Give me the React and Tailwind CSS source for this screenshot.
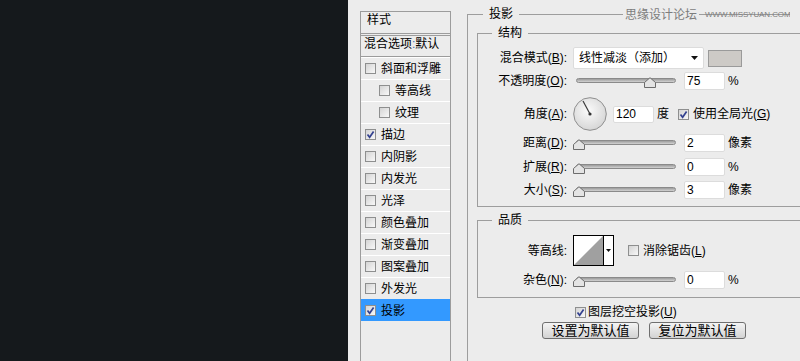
import React from "react";

const styleItems = [
  { name: "斜面和浮雕", sub: false, checked: false },
  { name: "等高线", sub: true, checked: false },
  { name: "纹理", sub: true, checked: false },
  { name: "描边", sub: false, checked: true },
  { name: "内阴影", sub: false, checked: false },
  { name: "内发光", sub: false, checked: false },
  { name: "光泽", sub: false, checked: false },
  { name: "颜色叠加", sub: false, checked: false },
  { name: "渐变叠加", sub: false, checked: false },
  { name: "图案叠加", sub: false, checked: false },
  { name: "外发光", sub: false, checked: false },
  { name: "投影", sub: false, checked: true, active: true },
];

function Check({ checked }) {
  return (
    <span className="flex h-[11px] w-[11px] shrink-0 items-center justify-center border border-[#8e8f8f] bg-gradient-to-br from-[#d4d4d4] to-[#f8f8f8]">
      {checked && (
        <svg viewBox="0 0 9 9" className="h-[9px] w-[9px]">
          <path d="M1.5 4.5 L3.6 7.2 L7.6 1.4" stroke="#33418f" strokeWidth="1.7" fill="none" />
        </svg>
      )}
    </span>
  );
}

function Label({ children }) {
  return <div className="w-[89px] shrink-0 text-right leading-[16px]">{children}</div>;
}

function Field({ value, w = "w-[41px]", h = "h-[18px]" }) {
  return (
    <div className={`${w} ${h} flex shrink-0 items-center rounded-[2px] border border-[#dcdcdc] bg-white pl-[2px] leading-[14px]`}>
      {value}
    </div>
  );
}

function Slider({ pos }) {
  return (
    <div className="relative ml-[6px] h-[18px] w-[103px] shrink-0">
      <div className="absolute left-[3px] right-0 top-[6px] h-[5px] rounded-full border border-[#8a8a8a] bg-gradient-to-b from-[#9c9c9c] to-[#d2d2d2]" />
      <svg className="absolute top-[5px]" style={{ left: pos }} width="12" height="11" viewBox="0 0 12 11">
        <path d="M0.5 10.5 V5.5 L6 0.7 L11.5 5.5 V10.5 Z" fill="#e4e4e4" stroke="#6c6c6c" />
      </svg>
    </div>
  );
}

function SliderRow({ label, pos, value, unit, className }) {
  return (
    <div className={`flex h-[18px] items-center ${className}`}>
      <Label>{label}</Label>
      <Slider pos={pos} />
      <div className="ml-[8px]">
        <Field value={value} />
      </div>
      <span className="ml-[3px] leading-[16px]">{unit}</span>
    </div>
  );
}

export default function App() {
  return (
    <div className="flex h-[361px] w-[800px] overflow-hidden bg-[#15191c] font-['Liberation_Sans','Noto_Sans_CJK_SC',sans-serif] text-[12px] text-black">
      <div className="w-[348px] shrink-0" />

      <div className="relative flex flex-1 overflow-hidden bg-[#ececec]">
        {/* style list */}
        <div className="ml-[12px] mt-[11px] flex h-[360px] w-[91px] shrink-0 flex-col border-x border-t border-[#9c9c9c]">
          <div className="h-[22px] border-b border-[#9c9c9c] pl-[6px] leading-[16px]">样式</div>
          <div className="mt-[1px] h-[22px] border-y border-[#9c9c9c] pl-[3px] leading-[16px]">
            混合选项<span className="text-[#3a6fb0]">:</span>默认
          </div>
          {styleItems.map((item) => (
            <div
              key={item.name}
              className={`flex h-[22px] items-center border-t ${
                item.active ? "border-[#3399ff] bg-[#3399ff]" : "border-white"
              } ${item.sub ? "pl-[18px]" : "pl-[4px]"}`}
            >
              <Check checked={item.checked} />
              <span className="ml-[5px] leading-[16px]">{item.name}</span>
            </div>
          ))}
        </div>

        {/* settings */}
        <div className="ml-[16px] mt-[6px] shrink-0">
          <fieldset className="h-[400px] w-[340px] border border-[#9d9d9d]">
            <legend className="ml-[15px] px-[6px] leading-[16px]">投影</legend>

            <fieldset className="ml-[9px] mt-[3px] w-[340px] border border-[#9d9d9d] pb-[7px]">
              <legend className="ml-[14px] px-[6px] leading-[16px]">结构</legend>

              <div className="mt-[6px] flex h-[22px] items-center">
                <Label>
                  混合模式(<u>B</u>):
                </Label>
                <div className="ml-[6px] flex h-[22px] w-[131px] items-center justify-between rounded-[2px] border border-[#dcdcdc] bg-white pl-[5px] pr-[5px]">
                  <span className="leading-[16px]">线性减淡（添加）</span>
                  <svg width="7" height="4" viewBox="0 0 7 4">
                    <path d="M0 0 H7 L3.5 4 Z" fill="#111" />
                  </svg>
                </div>
                <div className="ml-[4px] h-[17px] w-[34px] border border-[#9a9a9a] bg-[#cdcac6]" />
              </div>

              <SliderRow
                className="mt-[3px]"
                label={<>不透明度(<u>O</u>):</>}
                pos={71}
                value="75"
                unit="%"
              />

              <div className="mt-[7px] flex h-[34px] items-center">
                <Label>
                  角度(<u>A</u>):
                </Label>
                <svg className="ml-[6px] shrink-0" width="34" height="34" viewBox="0 0 34 34">
                  <defs>
                    <radialGradient id="dial" cx="45%" cy="40%" r="65%">
                      <stop offset="0" stopColor="#fbfbfb" />
                      <stop offset="1" stopColor="#d3d3d3" />
                    </radialGradient>
                  </defs>
                  <circle cx="17" cy="17" r="16.3" fill="url(#dial)" stroke="#8e8e8e" />
                  <line x1="17" y1="17" x2="10" y2="4" stroke="#3a3a3a" strokeWidth="1.2" />
                  <circle cx="17" cy="17" r="1.6" fill="#333" />
                </svg>
                <div className="ml-[6px]">
                  <Field value="120" h="h-[17px]" />
                </div>
                <span className="ml-[3px] leading-[16px]">度</span>
                <div className="ml-[9px]">
                  <Check checked />
                </div>
                <span className="ml-[4px] leading-[16px]">
                  使用全局光(<u>G</u>)
                </span>
              </div>

              <SliderRow className="mt-[3px]" label={<>距离(<u>D</u>):</>} pos={0} value="2" unit="像素" />
              <SliderRow className="mt-[6px]" label={<>扩展(<u>R</u>):</>} pos={0} value="0" unit="%" />
              <SliderRow className="mt-[5px]" label={<>大小(<u>S</u>):</>} pos={0} value="3" unit="像素" />
            </fieldset>

            <fieldset className="ml-[9px] mt-[5px] w-[340px] border border-[#9d9d9d] pb-[8px]">
              <legend className="ml-[14px] px-[6px] leading-[16px]">品质</legend>

              <div className="mt-[7px] flex h-[31px] items-center">
                <Label>等高线:</Label>
                <div className="ml-[6px] flex h-[31px] w-[41px] border border-black bg-white">
                  <svg width="29" height="29" viewBox="0 0 29 29">
                    <path d="M0 29 L29 0 V29 Z" fill="#a0a0a0" />
                  </svg>
                  <div className="flex flex-1 items-center justify-center border-l border-black">
                    <svg width="5" height="3" viewBox="0 0 5 3">
                      <path d="M0 0 H5 L2.5 3 Z" fill="#111" />
                    </svg>
                  </div>
                </div>
                <div className="ml-[14px]">
                  <Check />
                </div>
                <span className="ml-[4px] leading-[16px]">
                  消除锯齿(<u>L</u>)
                </span>
              </div>

              <SliderRow className="mt-[5px]" label={<>杂色(<u>N</u>):</>} pos={0} value="0" unit="%" />
            </fieldset>

            <div className="ml-[107px] mt-[6px] flex h-[16px] items-center">
              <Check checked />
              <span className="ml-[2px] leading-[16px]">
                图层挖空投影(<u>U</u>)
              </span>
            </div>

            <div className="ml-[74px] mt-[2px] flex gap-[10px]">
              <button className="h-[17px] w-[97px] rounded-[3px] border border-[#6f6f6f] bg-gradient-to-b from-[#f4f4f4] to-[#d3d3d3] text-[13px] leading-[15px]">
                设置为默认值
              </button>
              <button className="h-[17px] w-[97px] rounded-[3px] border border-[#6f6f6f] bg-gradient-to-b from-[#f4f4f4] to-[#d3d3d3] text-[13px] leading-[15px]">
                复位为默认值
              </button>
            </div>
          </fieldset>
        </div>

        {/* watermark */}
        <div className="absolute right-0 top-[7px] flex items-center pr-[11px] leading-[16px] text-[#7d7d7d]">
          <span className="bg-[#ececec] px-[2px]">思缘设计论坛</span>
          <span className="ml-[6px] w-[84px] whitespace-nowrap text-[8px] tracking-[-0.1px]">WWW.MISSYUAN.COM</span>
          <span className="absolute right-0 top-0 h-[16px] w-[10px] bg-[#ececec]" />
        </div>
      </div>
    </div>
  );
}
